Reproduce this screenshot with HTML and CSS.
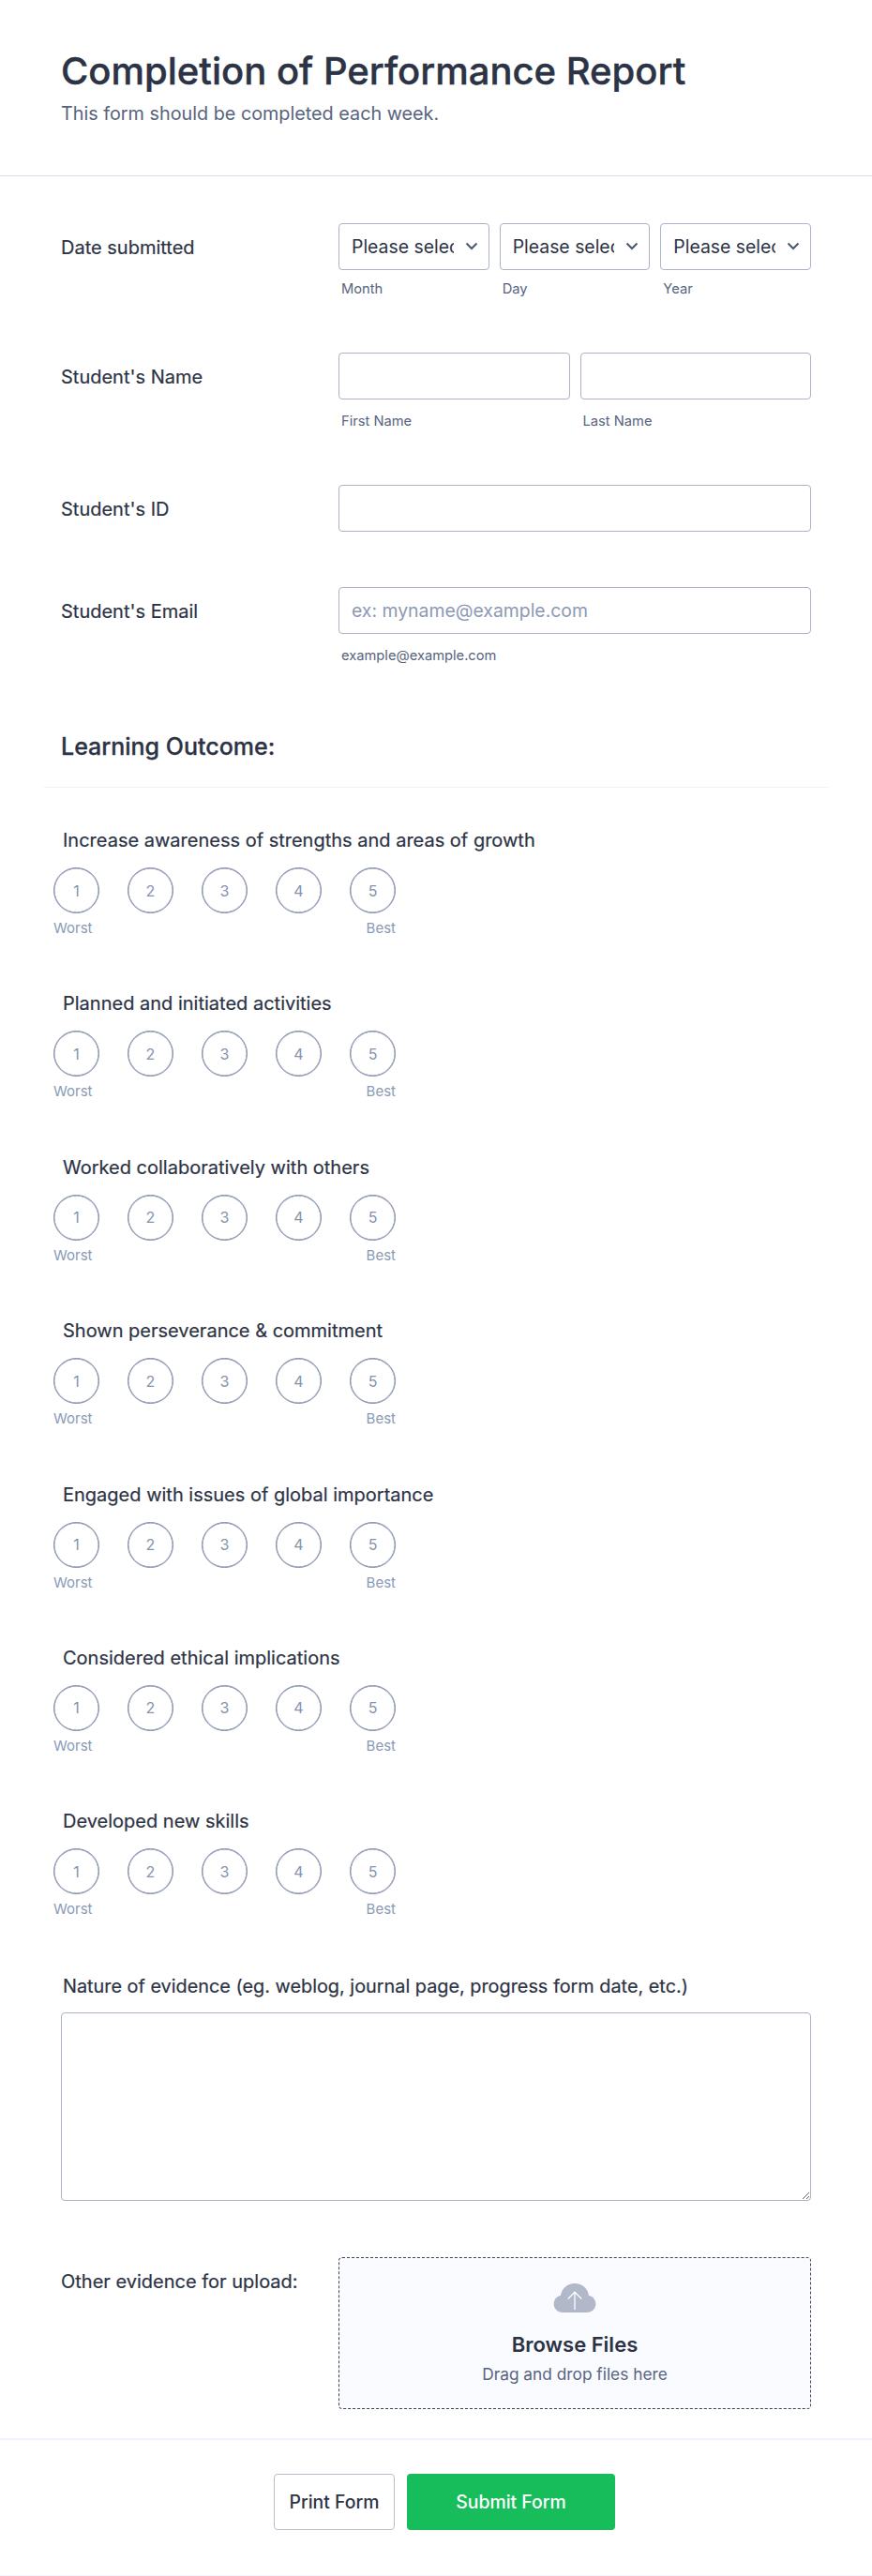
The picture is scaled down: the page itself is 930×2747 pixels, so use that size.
FILE: index.html
```html
<!DOCTYPE html>
<html lang="en">
<head>
<meta charset="utf-8">
<title>Completion of Performance Report</title>
<link rel="stylesheet" href="styles.css">
</head>
<body>
<form class="form">
  <header class="header">
    <h1>Completion of Performance Report</h1>
    <p>This form should be completed each week.</p>
  </header>

  <div class="fields">
    <div class="row row-date">
      <label class="label">Date submitted</label>
      <div class="control three">
        <div class="col"><div class="select-wrap"><select><option>Please select</option></select><svg class="chev" viewBox="0 0 14 9" width="14" height="9"><path d="M1.5 1.5 7 7l5.5-5.5" fill="none" stroke="#4b5675" stroke-width="2"/></svg></div><span class="sub sub-date">Month</span></div>
        <div class="col"><div class="select-wrap"><select><option>Please select</option></select><svg class="chev" viewBox="0 0 14 9" width="14" height="9"><path d="M1.5 1.5 7 7l5.5-5.5" fill="none" stroke="#4b5675" stroke-width="2"/></svg></div><span class="sub sub-date">Day</span></div>
        <div class="col"><div class="select-wrap"><select><option>Please select</option></select><svg class="chev" viewBox="0 0 14 9" width="14" height="9"><path d="M1.5 1.5 7 7l5.5-5.5" fill="none" stroke="#4b5675" stroke-width="2"/></svg></div><span class="sub sub-date">Year</span></div>
      </div>
    </div>

    <div class="row row-name">
      <label class="label">Student's Name</label>
      <div class="control two">
        <div class="col"><input type="text"><span class="sub">First Name</span></div>
        <div class="col"><input type="text"><span class="sub">Last Name</span></div>
      </div>
    </div>

    <div class="row row-id">
      <label class="label">Student's ID</label>
      <div class="control"><input type="text"></div>
    </div>

    <div class="row row-email">
      <label class="label">Student's Email</label>
      <div class="control"><input type="email" placeholder="ex: myname@example.com"><span class="sub">example@example.com</span></div>
    </div>
  </div>

  <div class="section-head"><h2>Learning Outcome:</h2></div>

  <div class="ratings">
    <section class="rating">
      <h3>Increase awareness of strengths and areas of growth</h3>
      <div class="scale"><span>1</span><span>2</span><span>3</span><span>4</span><span>5</span></div>
      <div class="ends"><span>Worst</span><span>Best</span></div>
    </section>
    <section class="rating">
      <h3>Planned and initiated activities</h3>
      <div class="scale"><span>1</span><span>2</span><span>3</span><span>4</span><span>5</span></div>
      <div class="ends"><span>Worst</span><span>Best</span></div>
    </section>
    <section class="rating">
      <h3>Worked collaboratively with others</h3>
      <div class="scale"><span>1</span><span>2</span><span>3</span><span>4</span><span>5</span></div>
      <div class="ends"><span>Worst</span><span>Best</span></div>
    </section>
    <section class="rating">
      <h3>Shown perseverance &amp; commitment</h3>
      <div class="scale"><span>1</span><span>2</span><span>3</span><span>4</span><span>5</span></div>
      <div class="ends"><span>Worst</span><span>Best</span></div>
    </section>
    <section class="rating">
      <h3>Engaged with issues of global importance</h3>
      <div class="scale"><span>1</span><span>2</span><span>3</span><span>4</span><span>5</span></div>
      <div class="ends"><span>Worst</span><span>Best</span></div>
    </section>
    <section class="rating">
      <h3>Considered ethical implications</h3>
      <div class="scale"><span>1</span><span>2</span><span>3</span><span>4</span><span>5</span></div>
      <div class="ends"><span>Worst</span><span>Best</span></div>
    </section>
    <section class="rating">
      <h3>Developed new skills</h3>
      <div class="scale"><span>1</span><span>2</span><span>3</span><span>4</span><span>5</span></div>
      <div class="ends"><span>Worst</span><span>Best</span></div>
    </section>
  </div>

  <div class="evidence">
    <label class="evidence-label">Nature of evidence (eg. weblog, journal page, progress form date, etc.)</label>
    <textarea></textarea>
  </div>

  <div class="row row-upload">
    <label class="label">Other evidence for upload:</label>
    <div class="dropzone">
      <svg class="cloud" viewBox="0 0 48 34" width="48" height="33"><path d="M11 33C5 33 1 29 1 23.500 1 18.500 4.500 15 8.500 14.500 9.500 6.500 16 1 24 1s14.500 5.500 15.500 13.500C43.500 15 47 18.500 47 23.500 47 29 43 33 37 33Z" fill="#b1b8c9"/><path d="M24 30V11M16.500 18 24 10.500 31.500 18" fill="none" stroke="#fff" stroke-width="1.300"/></svg>
      <strong>Browse Files</strong>
      <span>Drag and drop files here</span>
    </div>
  </div>

  <footer class="footer">
    <button type="button" class="btn-print">Print Form</button>
    <button type="button" class="btn-submit">Submit Form</button>
  </footer>
</form>
</body>
</html>
```

FILE: styles.css
```css
* { box-sizing: border-box; }
html, body { margin: 0; padding: 0; background: #fff; }
body { font-family: Inter, "Liberation Sans", sans-serif; color: #2c3345; }
.form { width: 930px; height: 2747px; border-bottom: 1px solid #f3f3fe; }

.header { height: 188px; padding: 52px 65px 0; border-bottom: 1px solid #d8dae9; }
.header h1 { margin: 0; font-size: 40px; line-height: 48px; font-weight: 500; color: #2c3345; -webkit-text-stroke: 0.4px #2c3345; }
.header p { margin: 7px 0 0; font-size: 19.8px; line-height: 28px; color: #57647e; }

.fields { padding: 50px 65px 0; }
.row { display: flex; }
.label { width: 296px; flex: none; padding-top: 14px; font-size: 20px; line-height: 24px; font-weight: 400; color: #2c3345; -webkit-text-stroke: 0.2px #2c3345; }
.control { flex: 1; min-width: 0; }
.three, .two { display: flex; gap: 11px; }
.col { flex: 1; min-width: 0; }
.sub { display: block; margin-top: 14px; padding-left: 3px; font-size: 14.7px; line-height: 18px; color: #57647e; }
.sub-date { margin-top: 11px; }
.row-date { height: 138px; }
.row-name { height: 141px; }
.row-id { height: 109px; }
.row-email { height: 153px; }

input, select, textarea { display: block; width: 100%; border: 1px solid #adb3c6; border-radius: 4px; background: #fff; font-family: inherit; color: #2c3345; outline: none; }
input { height: 50px; padding: 0 13px; font-size: 19.4px; }
input::placeholder { color: #8d99b3; opacity: 1; }
.select-wrap { position: relative; }
select { height: 50px; padding: 0 37px 0 13px; font-size: 19.4px; appearance: none; -webkit-appearance: none; }
.chev { position: absolute; top: 20px; right: 12px; pointer-events: none; }

.section-head { margin: 0 47px; height: 61px; border-bottom: 1px solid #f0f1f6; padding: 1px 18px 0; }
.section-head h2 { margin: 0; font-size: 25px; line-height: 32px; font-weight: 500; color: #2c3345; -webkit-text-stroke: 0.3px #2c3345; }

.ratings { padding-top: 42px; }
.rating { height: 174.4px; padding-left: 57px; }
.rating h3 { margin: 0 0 0 10px; font-size: 20px; line-height: 28px; font-weight: 400; color: #2c3345; -webkit-text-stroke: 0.2px #2c3345; }
.scale { display: flex; gap: 30px; margin-top: 15px; }
.scale span { width: 49px; height: 49px; display: flex; align-items: center; justify-content: center; border: 1px solid #7f89a8; border-radius: 50%; box-shadow: inset 0 0 0 0.4px #7f89a8; font-size: 16px; color: #8494ae; }
.ends { display: flex; justify-content: space-between; width: 365px; margin-top: 7px; font-size: 15px; line-height: 18px; color: #8a9ab5; }

.evidence { padding: 0 65px; margin-top: 1px; }
.evidence-label { display: block; padding-left: 2px; font-size: 19.85px; line-height: 28px; font-weight: 400; color: #2c3345; -webkit-text-stroke: 0.2px #2c3345; }
textarea { height: 201px; margin-top: 14.5px; resize: vertical; }

.row-upload { padding: 60px 65px 0; height: 253px; }
.row-upload .label { padding-top: 14px; }
.dropzone { flex: 1; height: 162px; padding-top: 26px; display: flex; flex-direction: column; align-items: center; border: 1px dashed #3a4358; border-radius: 4px; background: #fafbff; }
.cloud { display: block; }
.dropzone strong { margin-top: 18px; font-size: 22px; line-height: 30px; font-weight: 600; color: #2c3345; }
.dropzone span { margin-top: 5px; font-size: 17.3px; line-height: 24px; color: #57647e; }

.footer { display: flex; justify-content: center; gap: 13px; padding: 36px 0 0 18px; border-top: 2px solid #f3f3fe; }
.footer button { height: 60px; border-radius: 4px; font-family: inherit; font-size: 19.4px; font-weight: 500; }
.btn-print { width: 129px; background: #fff; border: 1px solid #b8bdc9; color: #2c3345; }
.btn-submit { width: 222px; background: #18bd5b; border: 0; color: #fff; }
```
